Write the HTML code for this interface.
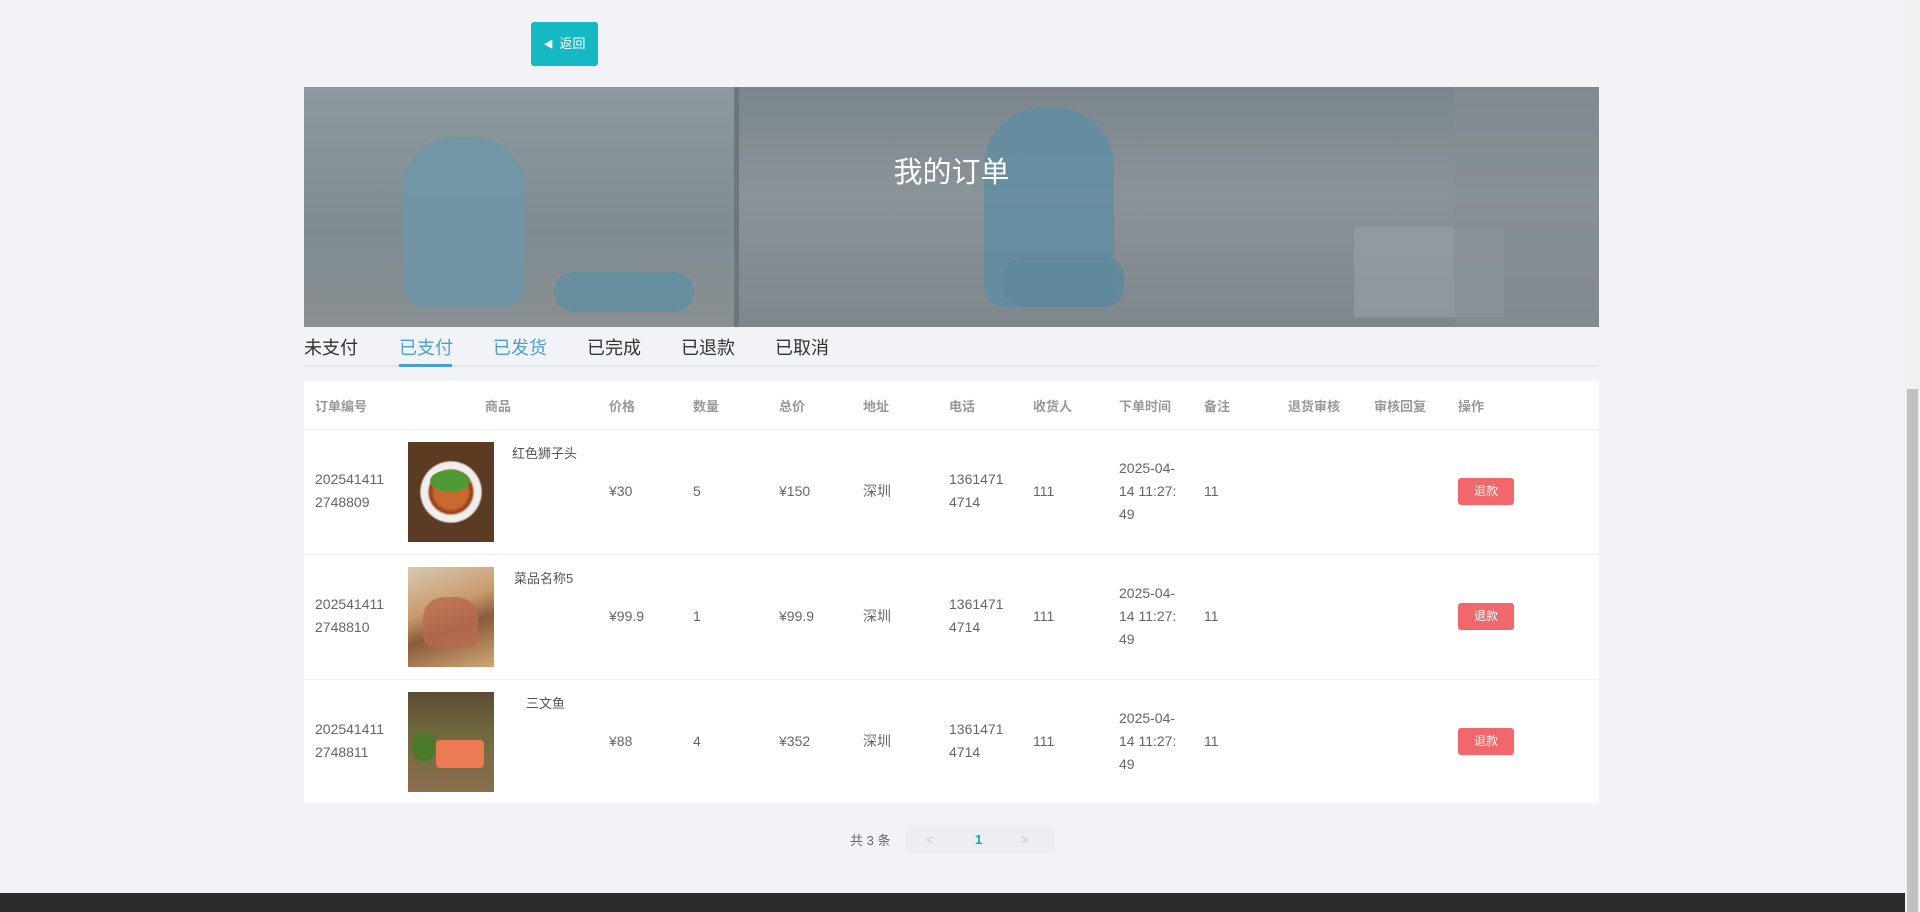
<!DOCTYPE html>
<html><head><meta charset="utf-8">
<style>
*{margin:0;padding:0;box-sizing:border-box}
body{width:1920px;height:912px;overflow:hidden;background:#f2f3f7;font-family:"Liberation Sans","Noto Sans CJK SC",sans-serif;position:relative;color:#666}
.abs{position:absolute}
.btn{left:531px;top:22px;width:67px;height:44px;background:#16b9c3;border-radius:3px;color:#fff;font-size:13px;line-height:44px;text-align:center}
.banner{left:304px;top:87px;width:1295px;height:240px;overflow:hidden;background:linear-gradient(90deg,#7f8c92 0%,#8a979c 20%,#7d888d 27%,#6c757b 34%,#737c82 55%,#6b747a 75%,#7b848a 100%)}
.title{left:0;width:100%;top:62px;text-align:center;color:#fff;font-size:29px}
.tabs{top:334px;left:304px;font-size:18px;color:#333}
.tab{position:absolute;top:0;white-space:nowrap}
.tbl{left:304px;top:381px;width:1295px;height:422px;background:#fff}
.hd{position:absolute;top:15px;font-size:13px;color:#999;font-weight:bold}
.row{position:absolute;left:0;width:1295px;height:125px;border-top:1px solid #eef0f3}
.c{position:absolute;font-size:14px;color:#666;line-height:23px}
.rf{position:absolute;left:1154px;top:48px;width:56px;height:27px;background:#f0686c;border-radius:3px;color:#fff;font-size:12px;line-height:27px;text-align:center}
.img{position:absolute;left:104px;top:12px;width:86px;height:100px}
</style></head><body>
<div class="abs btn"><span style="font-size:10px;margin-right:6px">◀</span>返回</div>
<div class="abs banner">
 <div class="abs" style="left:0;top:0;width:430px;height:240px;background:linear-gradient(180deg,#8c9aa0,#7f8d93 60%,#8a8f92)"></div>
 <div class="abs" style="left:435px;top:0;width:860px;height:240px;background:linear-gradient(180deg,#7b868c,#8a9398 45%,#7d878c)"></div>
 <div class="abs" style="left:100px;top:50px;width:120px;height:170px;background:#6e96a8;border-radius:50px 50px 20px 20px;opacity:.85"></div>
 <div class="abs" style="left:250px;top:185px;width:140px;height:40px;background:#5f8ea2;border-radius:20px;opacity:.8"></div>
 <div class="abs" style="left:680px;top:20px;width:130px;height:200px;background:#5f8da3;border-radius:60px 60px 20px 20px;opacity:.8"></div>
 <div class="abs" style="left:700px;top:170px;width:120px;height:50px;background:#5d879b;border-radius:20px;opacity:.8"></div>
 <div class="abs" style="left:1050px;top:140px;width:150px;height:90px;background:#9aa2a6;opacity:.6"></div>
 <div class="abs" style="left:1150px;top:0;width:145px;height:240px;background:#858e93;opacity:.6"></div>
 <div class="abs title">我的订单</div>
</div>
<div class="abs" style="left:304px;top:365px;width:1295px;height:2px;background:#e4e7ec"></div>
<div class="abs tabs">
 <span class="tab" style="left:0">未支付</span>
 <span class="tab" style="left:95px;color:#4b9fd5">已支付</span>
 <span class="tab" style="left:189px;color:#4b9fd5">已发货</span>
 <span class="tab" style="left:283px">已完成</span>
 <span class="tab" style="left:377px">已退款</span>
 <span class="tab" style="left:471px">已取消</span>
</div>
<div class="abs" style="left:399px;top:364px;width:53px;height:3px;background:#4b9fd5"></div>
<div class="abs tbl">
 <span class="hd" style="left:11px">订单编号</span>
 <span class="hd" style="left:181px">商品</span>
 <span class="hd" style="left:305px">价格</span>
 <span class="hd" style="left:389px">数量</span>
 <span class="hd" style="left:475px">总价</span>
 <span class="hd" style="left:559px">地址</span>
 <span class="hd" style="left:645px">电话</span>
 <span class="hd" style="left:729px">收货人</span>
 <span class="hd" style="left:815px">下单时间</span>
 <span class="hd" style="left:900px">备注</span>
 <span class="hd" style="left:984px">退货审核</span>
 <span class="hd" style="left:1070px">审核回复</span>
 <span class="hd" style="left:1154px">操作</span>

 <div class="row" style="top:48px">
  <div class="c" style="left:11px;top:38px">202541411<br>2748809</div>
  <div class="img" style="background:radial-gradient(circle at 50% 50%,#c8692e 0 25%,#8f3c1c 32%,#f4efe8 36%,#eee 45%,#5c3b23 48%)"><div style="position:absolute;left:22px;top:28px;width:40px;height:22px;background:#4f9a35;border-radius:50%"></div></div>
  <div class="c" style="left:208px;top:12px;font-size:13px;color:#555">红色狮子头</div>
  <div class="c" style="left:305px;top:50px">¥30</div>
  <div class="c" style="left:389px;top:50px">5</div>
  <div class="c" style="left:475px;top:50px">¥150</div>
  <div class="c" style="left:559px;top:50px">深圳</div>
  <div class="c" style="left:645px;top:38px">1361471<br>4714</div>
  <div class="c" style="left:729px;top:50px">111</div>
  <div class="c" style="left:815px;top:27px">2025-04-<br>14 11:27:<br>49</div>
  <div class="c" style="left:900px;top:50px">11</div>
  <div class="rf">退款</div>
 </div>
 <div class="row" style="top:173px">
  <div class="c" style="left:11px;top:38px">202541411<br>2748810</div>
  <div class="img" style="background:linear-gradient(160deg,#d8c9b0,#c99a6c 40%,#8b5a3a 60%,#d1a877)"><div style="position:absolute;left:15px;top:30px;width:55px;height:50px;background:#b96a4e;border-radius:40% 40% 20% 20%;opacity:.8"></div></div>
  <div class="c" style="left:210px;top:12px;font-size:13px;color:#555">菜品名称5</div>
  <div class="c" style="left:305px;top:50px">¥99.9</div>
  <div class="c" style="left:389px;top:50px">1</div>
  <div class="c" style="left:475px;top:50px">¥99.9</div>
  <div class="c" style="left:559px;top:50px">深圳</div>
  <div class="c" style="left:645px;top:38px">1361471<br>4714</div>
  <div class="c" style="left:729px;top:50px">111</div>
  <div class="c" style="left:815px;top:27px">2025-04-<br>14 11:27:<br>49</div>
  <div class="c" style="left:900px;top:50px">11</div>
  <div class="rf">退款</div>
 </div>
 <div class="row" style="top:298px">
  <div class="c" style="left:11px;top:38px">202541411<br>2748811</div>
  <div class="img" style="background:linear-gradient(180deg,#5d4a35,#6e6a3c 40%,#8a6e4e)"><div style="position:absolute;left:28px;top:48px;width:48px;height:28px;background:#ec7a52;border-radius:4px"></div><div style="position:absolute;left:4px;top:40px;width:24px;height:30px;background:#4d7a2a;border-radius:50%"></div></div>
  <div class="c" style="left:222px;top:12px;font-size:13px;color:#555">三文鱼</div>
  <div class="c" style="left:305px;top:50px">¥88</div>
  <div class="c" style="left:389px;top:50px">4</div>
  <div class="c" style="left:475px;top:50px">¥352</div>
  <div class="c" style="left:559px;top:50px">深圳</div>
  <div class="c" style="left:645px;top:38px">1361471<br>4714</div>
  <div class="c" style="left:729px;top:50px">111</div>
  <div class="c" style="left:815px;top:27px">2025-04-<br>14 11:27:<br>49</div>
  <div class="c" style="left:900px;top:50px">11</div>
  <div class="rf">退款</div>
 </div>
</div>
<div class="abs" style="left:850px;top:830px;font-size:13px;color:#666">共 3 条</div>
<div class="abs" style="left:906px;top:826px;width:149px;height:27px;background:#eceef1;font-size:13px;line-height:27px">
 <span class="abs" style="left:20px;color:#c0c4cc">&lt;</span>
 <span class="abs" style="left:69px;color:#16aab5;font-weight:bold">1</span>
 <span class="abs" style="left:115px;color:#c0c4cc">&gt;</span>
</div>
<div class="abs" style="left:0;top:893px;width:1905px;height:19px;background:#2b2b2d"></div>
<div class="abs" style="left:1905px;top:0;width:15px;height:912px;background:#f1f1f1"></div>
<div class="abs" style="left:1907px;top:389px;width:11px;height:523px;background:#c1c1c1"></div>
</body></html>
